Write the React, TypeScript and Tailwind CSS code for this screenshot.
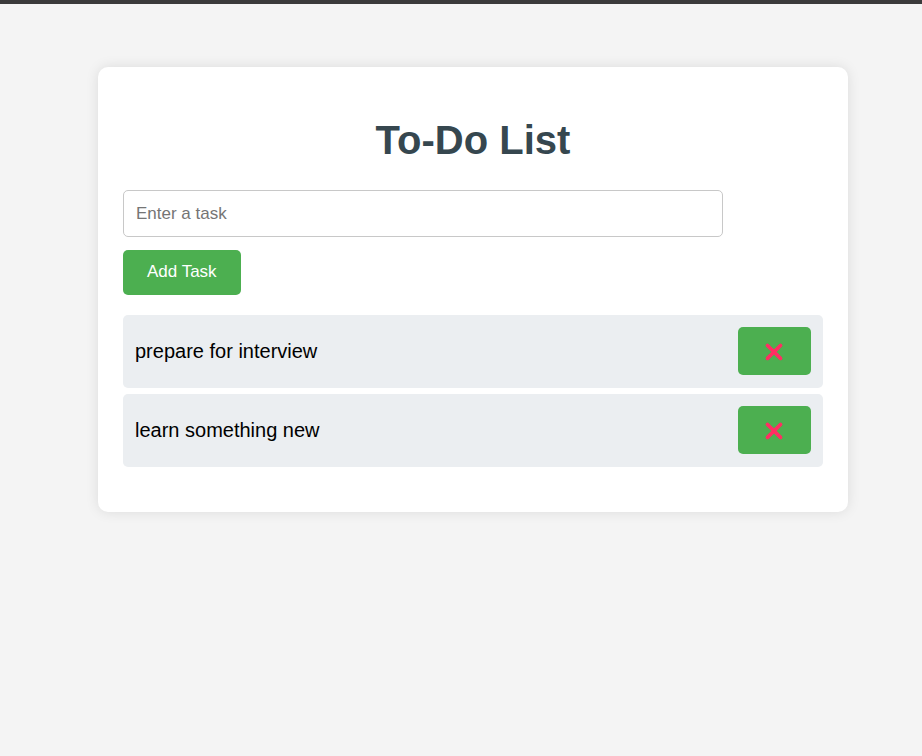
import { useState } from "react";
import type { FormEvent } from "react";

const buttonStyle = "cursor-pointer rounded-[5px] bg-[#4caf50] text-white";

function CrossIcon() {
  return (
    <svg className="h-5 w-[21px]" viewBox="0 0 21 20" fill="none" aria-hidden="true">
      <path d="M3.5 4.5L16.5 17.3M16.5 4.5L3.5 17.3" stroke="#ff2e63" strokeWidth="3.8" strokeLinecap="round" />
    </svg>
  );
}

export default function App() {
  const [tasks, setTasks] = useState(["prepare for interview", "learn something new"]);
  const [draft, setDraft] = useState("");

  function addTask(event: FormEvent) {
    event.preventDefault();
    if (!draft.trim()) return;
    setTasks([...tasks, draft.trim()]);
    setDraft("");
  }

  return (
    <div className="min-h-screen border-t-4 border-[#3b3a3b] bg-[#f4f4f4] pl-6 pt-[63px] font-['Liberation_Sans',Arial,sans-serif]">
      <main className="mx-auto w-full max-w-[750px] rounded-[10px] bg-white px-[25px] pt-12 pb-[45px] shadow-[0_0_13px_rgba(0,0,0,0.1)]">
        <h1 className="text-center text-[40px] leading-[50px] font-bold text-[#36474f]">To-Do List</h1>
        <form onSubmit={addTask} className="mt-[25px] flex flex-col items-start gap-[13px]">
          <input
            type="text"
            aria-label="Task"
            placeholder="Enter a task"
            value={draft}
            onChange={(event) => setDraft(event.target.value)}
            className="h-[47px] w-6/7 rounded-[5px] border border-[#c8c8c8] px-3 text-[17px] text-black placeholder:text-[#757575]"
          />
          <button type="submit" className={`${buttonStyle} h-[45px] px-6 pb-0.5 text-[17px]`}>
            Add Task
          </button>
        </form>
        <ul className="mt-5 flex flex-col gap-1.5">
          {tasks.map((task, index) => (
            <li key={index} className="flex items-center justify-between rounded-[5px] bg-[#ebeef1] p-3 pb-[13px]">
              <span className="text-[20px] leading-6">{task}</span>
              <button
                type="button"
                aria-label={`Delete ${task}`}
                onClick={() => setTasks(tasks.filter((_, i) => i !== index))}
                className={`${buttonStyle} flex h-12 w-[73px] items-center justify-center`}
              >
                <CrossIcon />
              </button>
            </li>
          ))}
        </ul>
      </main>
    </div>
  );
}
